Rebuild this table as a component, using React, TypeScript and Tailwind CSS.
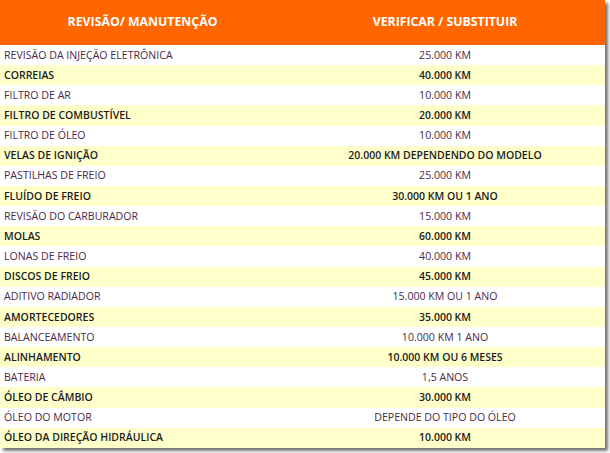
const rows: [string, string][] = [
  ['REVISÃO DA INJEÇÃO ELETRÔNICA', '25.000 KM'],
  ['CORREIAS', '40.000 KM'],
  ['FILTRO DE AR', '10.000 KM'],
  ['FILTRO DE COMBUSTÍVEL', '20.000 KM'],
  ['FILTRO DE ÓLEO', '10.000 KM'],
  ['VELAS DE IGNIÇÃO', '20.000 KM DEPENDENDO DO MODELO'],
  ['PASTILHAS DE FREIO', '25.000 KM'],
  ['FLUÍDO DE FREIO', '30.000 KM OU 1 ANO'],
  ['REVISÃO DO CARBURADOR', '15.000 KM'],
  ['MOLAS', '60.000 KM'],
  ['LONAS DE FREIO', '40.000 KM'],
  ['DISCOS DE FREIO', '45.000 KM'],
  ['ADITIVO RADIADOR', '15.000 KM OU 1 ANO'],
  ['AMORTECEDORES', '35.000 KM'],
  ['BALANCEAMENTO', '10.000 KM 1 ANO'],
  ['ALINHAMENTO', '10.000 KM OU 6 MESES'],
  ['BATERIA', '1,5 ANOS'],
  ['ÓLEO DE CÂMBIO', '30.000 KM'],
  ['ÓLEO DO MOTOR', 'DEPENDE DO TIPO DO ÓLEO'],
  ['ÓLEO DA DIREÇÃO HIDRÁULICA', '10.000 KM'],
];

export default function App() {
  return (
    <div className="w-[610px] h-[453px] bg-white" style={{ fontFamily: '"Open Sans", "Noto Sans", sans-serif' }}>
      <div className="w-[605px] h-[448px] flex flex-col shadow-[3px_3px_3px_rgba(0,0,0,0.55)]">
        <div className="h-[45px] shrink-0 bg-[#ff6600] flex items-center text-white font-bold text-[12.3px]">
          <div className="w-[285px] text-center">REVISÃO/ MANUTENÇÃO</div>
          <div className="flex-1 text-center">VERIFICAR / SUBSTITUIR</div>
        </div>
        {rows.map(([item, value], idx) => {
          const odd = idx % 2 === 1;
          return (
            <div
              key={idx}
              className={
                odd
                  ? 'h-[20.15px] shrink-0 pt-[1px] flex items-center bg-[#ffffcc] text-[#1c1c1c] text-[10.5px] font-semibold'
                  : 'h-[20.15px] shrink-0 pt-[1px] flex items-center bg-white text-[#4a2a4a] text-[10.6px]'
              }
            >
              <div className="w-[285px] pl-[4px]">{item}</div>
              <div className="flex-1 text-center">{value}</div>
            </div>
          );
        })}
      </div>
    </div>
  );
}
